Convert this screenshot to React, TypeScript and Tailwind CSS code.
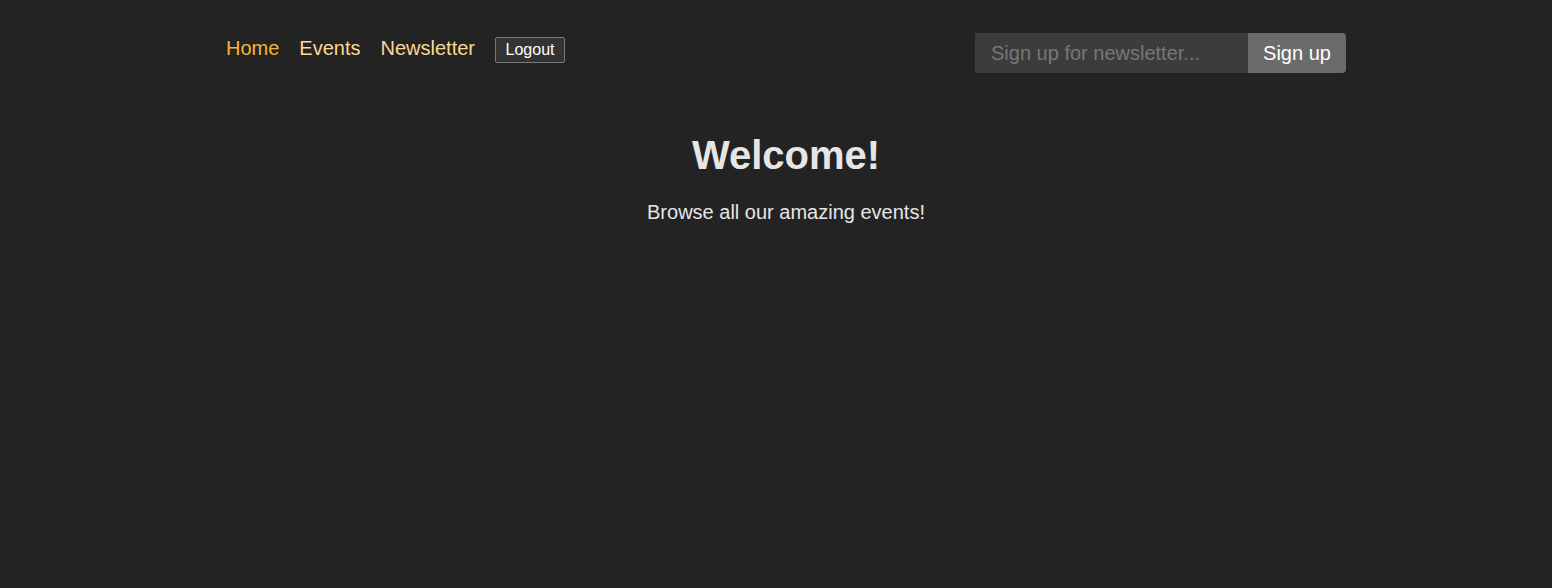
import React from 'react';

const App: React.FC = () => {
  return (
    <div
      className="min-h-[588px] bg-[#232323] text-[#e4e4e4]"
      style={{ fontFamily: '"Liberation Sans", Arial, sans-serif' }}
    >
      <header className="flex items-start justify-between pl-[226px] pr-[206px] pt-[33px]">
        <nav className="mt-[4px]">
          <ul className="flex items-start gap-[20px] text-[20px] leading-[22px]">
            <li>
              <a href="#" className="text-[#f8b33b]">Home</a>
            </li>
            <li>
              <a href="#" className="text-[#fbd991]">Events</a>
            </li>
            <li>
              <a href="#" className="text-[#fbd991]">Newsletter</a>
            </li>
            <li>
              <button className="-mt-px h-[26px] w-[70px] rounded-[2px] border border-[#7a7a7a] bg-[#333333] text-[16px] leading-[18px] text-white">
                Logout
              </button>
            </li>
          </ul>
        </nav>

        {/* Newsletter signup */}
        <form className="flex h-[40px]" onSubmit={(e) => e.preventDefault()}>
          <input
            type="email"
            placeholder="Sign up for newsletter..."
            className="w-[273px] bg-[#3c3c3c] pl-[16px] text-[20px] text-[#dddddd] outline-none placeholder:text-[#777777]"
          />
          <button className="w-[98px] rounded-r-[4px] bg-[#6b6b6b] text-[20px] text-white">
            Sign up
          </button>
        </form>
      </header>

      <main className="pl-[20px] pt-[59px] text-center">
        <h1 className="text-[40px] font-bold leading-[46px] text-[#e6e6e6]">Welcome!</h1>
        <p className="mt-[23px] text-[20px] leading-[23px] text-[#e6e6e6]">Browse all our amazing events!</p>
      </main>
    </div>
  );
};

export default App;
